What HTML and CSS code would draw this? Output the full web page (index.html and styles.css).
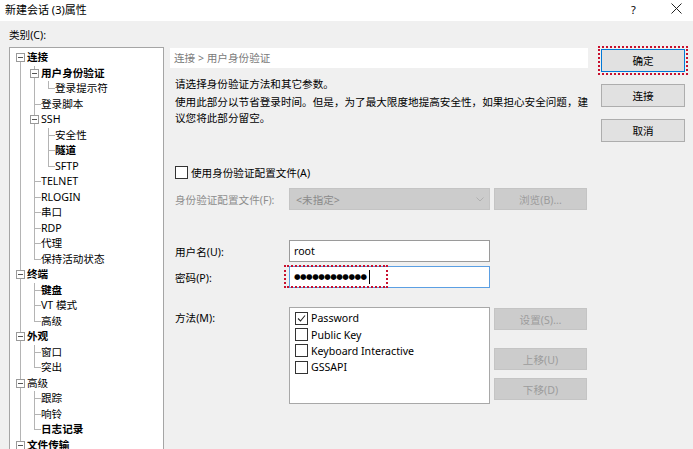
FILE: index.html
```html
<!DOCTYPE html>
<html lang="zh-CN">
<head>
<meta charset="utf-8">
<title>新建会话 (3)属性</title>
<link rel="stylesheet" href="styles.css">
</head>
<body>
<div class="titlebar">
  <span class="title">新建会话 (3)属性</span>
  <span class="help">?</span>
  <span class="close"><svg width="11" height="11" viewBox="0 0 11 11"><path d="M0.5 0.5L10.5 10.5M10.5 0.5L0.5 10.5" stroke="#222" stroke-width="1" fill="none"/></svg></span>
</div>
<div class="main">
  <div class="left">
    <div class="cat-label">类别(C):</div>
    <div class="tree">
      <div class="row b"><span class="g bx first"><i class="box"></i></span><span class="tx">连接</span></div>
      <div class="row b"><span class="g v"></span><span class="g bx"><i class="box"></i></span><span class="tx">用户身份验证</span></div>
      <div class="row"><span class="g v"></span><span class="g v"></span><span class="g l"></span><span class="tx">登录提示符</span></div>
      <div class="row"><span class="g v"></span><span class="g t"></span><span class="tx">登录脚本</span></div>
      <div class="row"><span class="g v"></span><span class="g bx"><i class="box"></i></span><span class="tx">SSH</span></div>
      <div class="row"><span class="g v"></span><span class="g v"></span><span class="g t"></span><span class="tx">安全性</span></div>
      <div class="row b"><span class="g v"></span><span class="g v"></span><span class="g t"></span><span class="tx">隧道</span></div>
      <div class="row"><span class="g v"></span><span class="g v"></span><span class="g l"></span><span class="tx">SFTP</span></div>
      <div class="row"><span class="g v"></span><span class="g t"></span><span class="tx">TELNET</span></div>
      <div class="row"><span class="g v"></span><span class="g t"></span><span class="tx">RLOGIN</span></div>
      <div class="row"><span class="g v"></span><span class="g t"></span><span class="tx">串口</span></div>
      <div class="row"><span class="g v"></span><span class="g t"></span><span class="tx">RDP</span></div>
      <div class="row"><span class="g v"></span><span class="g t"></span><span class="tx">代理</span></div>
      <div class="row"><span class="g v"></span><span class="g l"></span><span class="tx">保持活动状态</span></div>
      <div class="row b"><span class="g bx"><i class="box"></i></span><span class="tx">终端</span></div>
      <div class="row b"><span class="g v"></span><span class="g t"></span><span class="tx">键盘</span></div>
      <div class="row"><span class="g v"></span><span class="g t"></span><span class="tx">VT 模式</span></div>
      <div class="row"><span class="g v"></span><span class="g l"></span><span class="tx">高级</span></div>
      <div class="row b"><span class="g bx"><i class="box"></i></span><span class="tx">外观</span></div>
      <div class="row"><span class="g v"></span><span class="g t"></span><span class="tx">窗口</span></div>
      <div class="row"><span class="g v"></span><span class="g l"></span><span class="tx">突出</span></div>
      <div class="row"><span class="g bx"><i class="box"></i></span><span class="tx">高级</span></div>
      <div class="row"><span class="g v"></span><span class="g t"></span><span class="tx">跟踪</span></div>
      <div class="row"><span class="g v"></span><span class="g t"></span><span class="tx">响铃</span></div>
      <div class="row b"><span class="g v"></span><span class="g l"></span><span class="tx">日志记录</span></div>
      <div class="row b"><span class="g bx"><i class="box"></i></span><span class="tx">文件传输</span></div>
    </div>
  </div>

  <div class="panel">
    <div class="crumb">连接 &gt; 用户身份验证</div>
    <p class="desc first">请选择身份验证方法和其它参数。</p>
    <p class="desc">使用此部分以节省登录时间。但是，为了最大限度地提高安全性，如果担心安全问题，建<br>议您将此部分留空。</p>

    <div class="chk-row"><span class="cb"></span><span>使用身份验证配置文件(A)</span></div>

    <div class="field-row profile">
      <span class="lbl dis">身份验证配置文件(F):</span>
      <div class="combo"><span>&lt;未指定&gt;</span><svg class="chev" width="8" height="5" viewBox="0 0 8 5"><path d="M0.5 0.5L4 4L7.5 0.5" stroke="#b0b0b0" fill="none"/></svg></div>
      <div class="btn dis browse">浏览(B)...</div>
    </div>

    <div class="field-row user">
      <span class="lbl">用户名(U):</span>
      <div class="input">root</div>
    </div>

    <div class="field-row pass">
      <span class="lbl">密码(P):</span>
      <div class="input focus"><span class="dots">●●●●●●●●●●●●</span><span class="caret"></span><span class="ring"></span></div>
    </div>

    <div class="field-row method">
      <span class="lbl top">方法(M):</span>
      <div class="list">
        <div class="item"><span class="cb"><svg width="11" height="11" viewBox="0 0 11 11"><path d="M2 5.5L4.5 8L9 2.5" stroke="#222" stroke-width="1.1" fill="none"/></svg></span>Password</div>
        <div class="item"><span class="cb"></span>Public Key</div>
        <div class="item"><span class="cb"></span>Keyboard Interactive</div>
        <div class="item"><span class="cb"></span>GSSAPI</div>
      </div>
      <div class="side-btns">
        <div class="btn dis set">设置(S)...</div>
        <div class="btn dis up">上移(U)</div>
        <div class="btn dis down">下移(D)</div>
      </div>
    </div>
  </div>

  <div class="actions">
    <div class="btn default">确定</div>
    <div class="btn">连接</div>
    <div class="btn">取消</div>
  </div>
</div>
</body>
</html>
```

FILE: styles.css
```css
html, body {
  margin: 0;
  padding: 0;
}
body {
  width: 693px;
  height: 449px;
  overflow: hidden;
  background: #f0f0f0;
  font-family: "Noto Sans", "Noto Sans CJK SC", sans-serif;
  font-size: 10.6px;
  color: #000;
}

.titlebar {
  height: 21px;
  background: #fff;
  display: flex;
  align-items: center;
  padding-left: 5px;
}
.title {
  font-size: 11px;
  flex: 1;
  line-height: 18px;
  margin-top: -2px;
}
.help {
  font-size: 11px;
  width: 40px;
  margin-top: -2px;
}
.close {
  width: 22px;
  display: flex;
  margin-top: -4px;
}

.main {
  display: flex;
  padding-left: 9px;
}

/* left category tree */
.left {
  width: 155px;
  padding-top: 6px;
  flex: none;
}
.cat-label {
  line-height: 16px;
  margin-bottom: 4px;
}
.tree {
  height: 420px;
  background: #fff;
  border: 1px solid #a5a5a5;
  padding: 2px 0 0 3px;
  box-sizing: border-box;
}
.row {
  display: flex;
  align-items: center;
  height: 15.5px;
  white-space: nowrap;
}
.row.b .tx {
  font-weight: 700;
}
.tx {
  line-height: 15px;
}
.g {
  width: 14px;
  height: 100%;
  flex: none;
  display: flex;
  align-items: center;
}
.g.v {
  background: linear-gradient(#b4b4b4, #b4b4b4) 7px 0 / 1px 100% no-repeat;
}
.g.t {
  background:
    linear-gradient(#b4b4b4, #b4b4b4) 7px 0 / 1px 100% no-repeat,
    linear-gradient(#b4b4b4, #b4b4b4) 7px 50% / 7px 1px no-repeat;
}
.g.l {
  background:
    linear-gradient(#b4b4b4, #b4b4b4) 7px 0 / 1px 50% no-repeat,
    linear-gradient(#b4b4b4, #b4b4b4) 7px 50% / 7px 1px no-repeat;
}
.g.bx {
  background: linear-gradient(#b4b4b4, #b4b4b4) 7px 0 / 1px 100% no-repeat;
}
.g.bx.first {
  background: linear-gradient(#b4b4b4, #b4b4b4) 7px 100% / 1px 50% no-repeat;
}
.box {
  display: block;
  width: 9px;
  height: 9px;
  box-sizing: border-box;
  margin-left: 3px;
  border: 1px solid #9a9a9a;
  background: #fff linear-gradient(#555, #555) center / 5px 1px no-repeat;
}

/* center panel */
.panel {
  width: 418px;
  margin-left: 6px;
  padding-top: 27px;
  flex: none;
}
.crumb {
  height: 20px;
  line-height: 20px;
  background: #fff;
  color: #7a7a7a;
  padding-left: 4px;
}
.desc {
  margin: 2px 0 0;
  padding-left: 5px;
  line-height: 16px;
  white-space: nowrap;
}
.desc.first {
  margin-top: 8px;
}
.chk-row {
  display: flex;
  align-items: center;
  margin-top: 38px;
  padding-left: 5px;
  height: 16px;
}
.cb {
  width: 13px;
  height: 13px;
  box-sizing: border-box;
  border: 1px solid #333;
  background: #fff;
  margin-right: 3px;
  flex: none;
  display: flex;
  align-items: center;
  justify-content: center;
}
.field-row {
  display: flex;
  align-items: center;
  padding-left: 5px;
}
.lbl {
  width: 114px;
  flex: none;
}
.lbl.dis {
  color: #8d8d8d;
}
.lbl.top {
  align-self: flex-start;
  padding-top: 3px;
}
.profile {
  margin-top: 8px;
}
.combo {
  width: 201px;
  height: 22px;
  box-sizing: border-box;
  background: #cccccc;
  border: 1px solid #c4c4c4;
  color: #8a8a8a;
  display: flex;
  align-items: center;
  justify-content: space-between;
  padding: 0 5px 0 6px;
}
.btn {
  height: 23px;
  box-sizing: border-box;
  background: #e1e1e1;
  border: 1px solid #adadad;
  display: flex;
  align-items: center;
  justify-content: center;
}
.btn.dis {
  background: #cccccc;
  border-color: #c4c4c4;
  color: #9c9c9c;
}
.browse {
  width: 93px;
  height: 22px;
  margin-left: 4px;
}
.user {
  margin-top: 30px;
}
.pass {
  margin-top: 4px;
}
.input {
  width: 201px;
  height: 22px;
  box-sizing: border-box;
  background: #fff;
  border: 1px solid #9a9a9a;
  display: flex;
  align-items: center;
  padding-left: 4px;
  position: relative;
}
.input.focus {
  border-color: #5b9fe3;
}
.dots {
  font-family: "DejaVu Sans", sans-serif;
  font-size: 7.5px;
  letter-spacing: -0.5px;
  line-height: 10px;
}
.caret {
  width: 1px;
  height: 14px;
  background: #000;
  margin-left: 2px;
}
.ring {
  position: absolute;
  left: -6px;
  top: -2px;
  width: 104px;
  height: 23px;
  box-sizing: border-box;
  border: 2px dotted #c8102e;
}
.method {
  margin-top: 19px;
  align-items: flex-start;
}
.list {
  width: 201px;
  height: 97px;
  box-sizing: border-box;
  background: #fff;
  border: 1px solid #a8a8a8;
  padding: 2px 0 0 5px;
}
.item {
  display: flex;
  align-items: center;
  height: 16.4px;
  white-space: nowrap;
}
.side-btns {
  margin-left: 4px;
  padding-top: 1px;
}
.side-btns .btn {
  width: 93px;
  height: 22px;
}
.side-btns .up {
  margin-top: 18px;
}
.side-btns .down {
  margin-top: 8px;
}

/* right actions */
.actions {
  margin-left: 13px;
  padding-top: 28px;
  width: 84px;
  flex: none;
  display: flex;
  flex-direction: column;
  gap: 12px;
}
.btn.default {
  border-color: #0078d7;
  outline: 2px dotted #c8102e;
  outline-offset: 1px;
}
```
